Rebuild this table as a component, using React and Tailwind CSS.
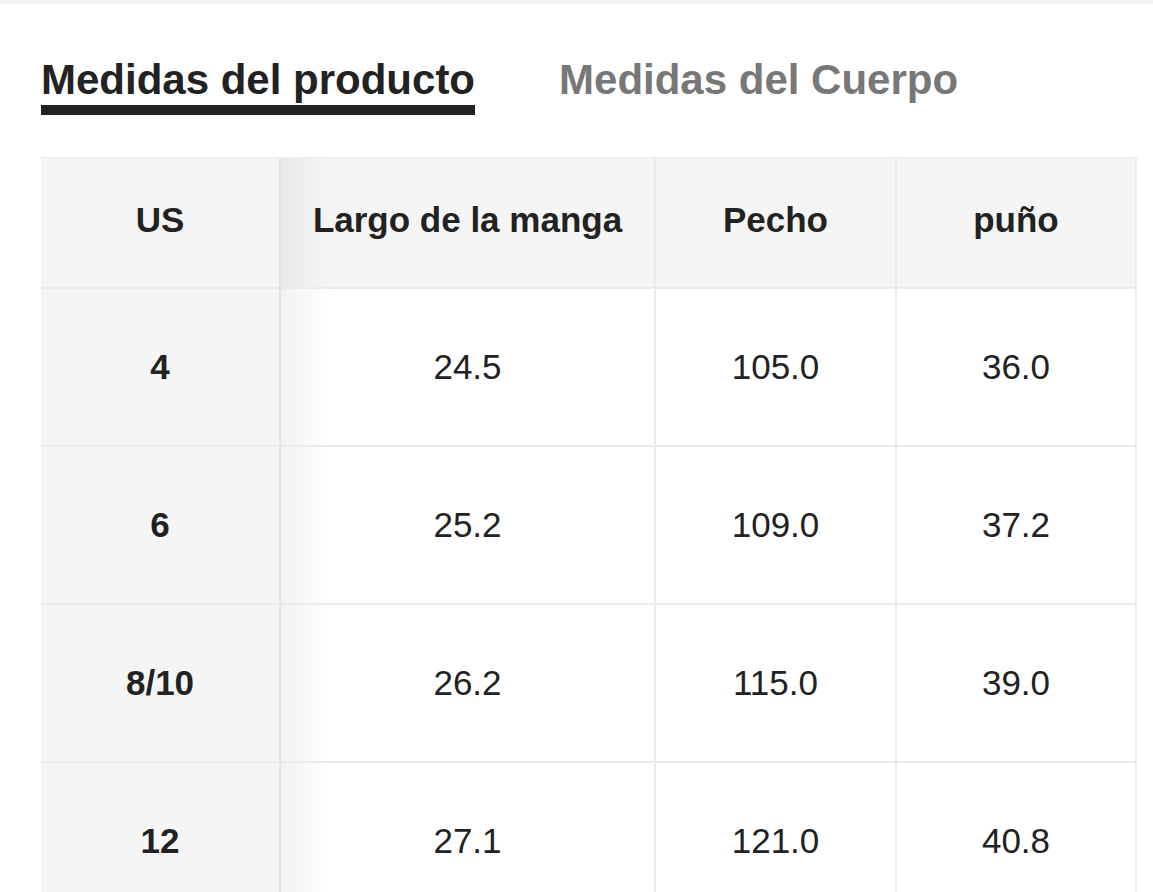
import React from "react";

const headers = ["US", "Largo de la manga", "Pecho", "puño"];

const rows = [
  ["4", "24.5", "105.0", "36.0"],
  ["6", "25.2", "109.0", "37.2"],
  ["8/10", "26.2", "115.0", "39.0"],
  ["12", "27.1", "121.0", "40.8"],
];

const App = () => {
  return (
    <div
      className="min-h-screen bg-white text-[#222] overflow-hidden"
      style={{ fontFamily: '"Liberation Sans", Arial, sans-serif' }}
    >
      {/* top strip */}
      <div className="h-[4px] bg-[#f2f2f2]"></div>

      {/* Tabs */}
      <div className="flex items-start gap-[84px] pl-[41px] pt-[52px]">
        <div className="flex flex-col">
          <span className="text-[42px] font-bold leading-[48px] text-[#222]">
            Medidas del producto
          </span>
          <div className="h-[10px] bg-[#222] mt-[1px]"></div>
        </div>
        <span className="text-[42px] font-bold leading-[48px] text-[#777]">
          Medidas del Cuerpo
        </span>
      </div>

      {/* Table */}
      <div className="ml-[41px] mt-[42px] w-[1096px] grid grid-cols-[240px_375px_241px_240px] border-t border-[#eeeeee]">
        {headers.map((h, i) => (
          <div
            key={h}
            className={`relative h-[131px] pb-[4px] flex items-center justify-center bg-[#f5f5f5] border-b-2 border-[#ebebeb] text-[35px] font-bold ${
              i === 0 ? "border-r-2 border-r-[#e4e4e4]" : "border-r-2"
            }`}
          >
            {h}
            {i === 0 && (
              <div className="absolute top-0 bottom-0 right-[-52px] w-[50px] bg-gradient-to-r from-black/[0.05] to-transparent pointer-events-none z-10"></div>
            )}
          </div>
        ))}
        {rows.map((r) =>
          r.map((v, i) => (
            <div
              key={r[0] + i}
              className={`relative h-[158px] flex items-center justify-center border-b-2 border-r-2 border-[#ebebeb] text-[35px] ${
                i === 0
                  ? "bg-[#f5f5f5] font-bold border-r-[#e4e4e4]"
                  : "bg-white"
              }`}
            >
              {v}
              {i === 0 && (
                <div className="absolute top-0 bottom-0 right-[-52px] w-[50px] bg-gradient-to-r from-black/[0.05] to-transparent pointer-events-none z-10"></div>
              )}
            </div>
          ))
        )}
      </div>
    </div>
  );
};

export default App;
